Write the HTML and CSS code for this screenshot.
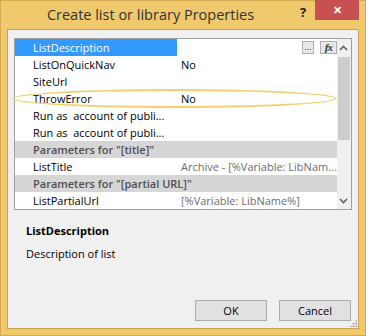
FILE: index.html
```html
<!DOCTYPE html>
<html lang="en">
<head>
    <meta charset="UTF-8">
    <title>Create list or library Properties</title>
    <link rel="stylesheet" href="styles.css">
</head>
<body>
    <div class="window">
        <div class="titlebar">
            <div class="title">Create list or library Properties</div>
            <div class="help">?</div>
            <div class="close">&#x2715;</div>
        </div>
        <div class="panel">
            <div class="grid">
                <div class="rows">
                    <div class="row selected">
                        <span class="name">ListDescription</span>
                        <span class="value"><span class="mini">...</span><span class="mini fx">fx</span></span>
                    </div>
                    <div class="row"><span class="name">ListOnQuickNav</span><span class="value">No</span></div>
                    <div class="row"><span class="name">SiteUrl</span><span class="value"></span></div>
                    <div class="row"><span class="name">ThrowError</span><span class="value">No</span></div>
                    <div class="row"><span class="name">Run as  account of publi...</span><span class="value"></span></div>
                    <div class="row"><span class="name">Run as  account of publi...</span><span class="value"></span></div>
                    <div class="row category">Parameters for "[title]"</div>
                    <div class="row"><span class="name">ListTitle</span><span class="value readonly">Archive - [%Variable: LibNam...</span></div>
                    <div class="row category">Parameters for "[partial URL]"</div>
                    <div class="row"><span class="name">ListPartialUrl</span><span class="value readonly">[%Variable: LibName%]</span></div>
                </div>
                <div class="scrollbar">
                    <div class="arrow">
                        <svg width="9" height="6" viewBox="0 0 9 6"><path d="M1 5 L4.5 1.5 L8 5" fill="none" stroke="#606060" stroke-width="1.6"/></svg>
                    </div>
                    <div class="track"><div class="thumb"></div></div>
                    <div class="arrow">
                        <svg width="9" height="6" viewBox="0 0 9 6"><path d="M1 1 L4.5 4.5 L8 1" fill="none" stroke="#606060" stroke-width="1.6"/></svg>
                    </div>
                </div>
                <div class="highlight"></div>
            </div>
            <div class="desc">
                <div class="desc-title">ListDescription</div>
                <div class="desc-text">Description of list</div>
            </div>
            <div class="buttons">
                <button class="btn">OK</button>
                <button class="btn">Cancel</button>
            </div>
            <div class="grip"></div>
        </div>
    </div>
</body>
</html>
```

FILE: styles.css
```css
* {
    box-sizing: border-box;
    margin: 0;
    padding: 0;
}
body {
    font-family: 'Open Sans', 'Noto Sans', sans-serif;
    background: #fff;
}
.window {
    width: 366px;
    height: 336px;
    background: #f0c96d;
    border: 1px solid #d3a951;
    display: flex;
    flex-direction: column;
}
/* Title bar */
.titlebar {
    height: 28px;
    display: flex;
    align-items: flex-start;
}
.title {
    flex: 1;
    text-align: center;
    font-size: 14.5px;
    line-height: 28px;
    color: #333;
}
.help {
    width: 13px;
    margin-right: 2px;
    font-size: 13px;
    font-weight: bold;
    color: #222;
    line-height: 22px;
}
.close {
    width: 44px;
    height: 20px;
    margin-top: -1px;
    margin-right: 6px;
    background: #c75050;
    color: #fff;
    font-size: 11px;
    font-weight: bold;
    text-align: center;
    line-height: 20px;
}
/* Inner panel */
.panel {
    flex: 1;
    margin: 0 6px 6px 6px;
    background: #f0f0f0;
    border: 1px solid #c9a350;
    padding: 8px 6px 7px 6px;
    display: flex;
    flex-direction: column;
    position: relative;
}
.grid {
    height: 172px;
    border: 1px solid #a0a0a0;
    background: #fff;
    display: flex;
    position: relative;
}
.rows {
    flex: 1;
}
.row {
    height: 17px;
    display: flex;
    font-size: 11px;
    line-height: 17px;
    color: #000;
}
.name {
    width: 162px;
    padding-left: 18px;
    white-space: pre;
    overflow: hidden;
}
.value {
    flex: 1;
    padding-left: 3px;
    margin-left: 1px;
    white-space: nowrap;
    overflow: hidden;
    display: flex;
    align-items: center;
}
.selected .name {
    background: #3399ff;
    color: #fff;
}
.selected .value {
    justify-content: flex-end;
    gap: 6px;
}
.mini {
    height: 13px;
    border: 1px solid #adadad;
    background: #e8e8e8;
    font-size: 9px;
    line-height: 9px;
    color: #333;
    width: 12px;
    text-align: center;
}
.mini.fx {
    width: 17px;
    font-family: 'Liberation Serif', serif;
    font-style: italic;
    font-weight: bold;
    font-size: 11px;
    line-height: 11px;
    letter-spacing: -1px;
}
.readonly {
    color: #6d6d6d;
}
.category {
    background: #d6d6d6;
    color: #505050;
    font-weight: 600;
    padding-left: 18px;
    white-space: nowrap;
}
/* Scrollbar */
.scrollbar {
    width: 17px;
    background: #f0f0f0;
    display: flex;
    flex-direction: column;
}
.arrow {
    height: 17px;
    display: flex;
    align-items: center;
    justify-content: center;
}
.track {
    flex: 1;
    padding: 1px 1px 0 1px;
}
.thumb {
    height: 83px;
    background: #cdcdcd;
}
/* Annotation ellipse */
.highlight {
    position: absolute;
    left: -3px;
    top: 50px;
    width: 325px;
    height: 19px;
    border: 2px solid #f3cf6e;
    border-radius: 50%;
}
/* Description */
.desc {
    margin-top: 12px;
    padding-left: 12px;
    font-size: 11px;
    color: #000;
}
.desc-title {
    font-weight: bold;
    line-height: 17px;
}
.desc-text {
    margin-top: 6px;
    line-height: 17px;
}
.buttons {
    margin-top: auto;
    display: flex;
    justify-content: flex-end;
    gap: 12px;
    padding-right: 1px;
}
.btn {
    width: 72px;
    height: 21px;
    border: 1px solid #adadad;
    background: #e1e1e1;
    font-family: 'Open Sans', 'Noto Sans', sans-serif;
    font-size: 11px;
    color: #000;
}
.grip {
    position: absolute;
    right: 1px;
    bottom: 1px;
    width: 8px;
    height: 8px;
    background-image: radial-gradient(circle, #b8b8b8 1px, transparent 1.2px);
    background-size: 3px 3px;
    clip-path: polygon(100% 0, 100% 100%, 0 100%);
}
```
